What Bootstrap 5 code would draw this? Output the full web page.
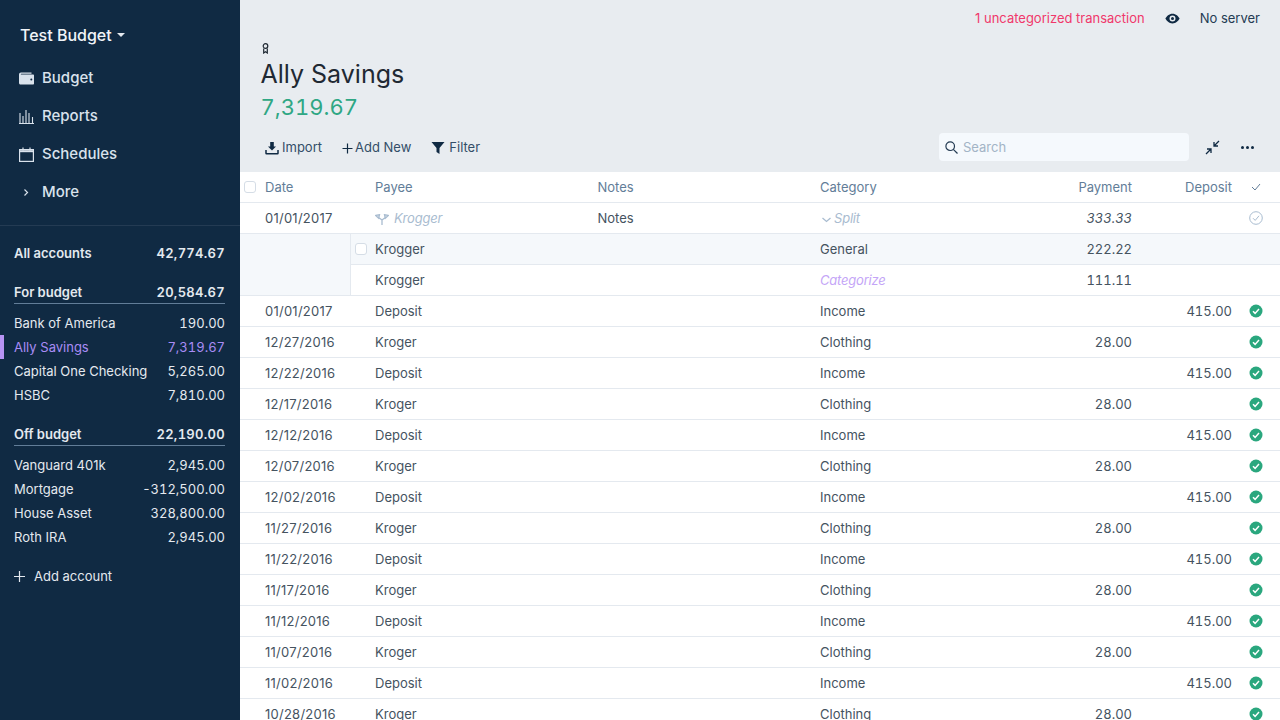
<!DOCTYPE html>
<html lang="en">
<head>
  <meta charset="UTF-8">
  <title>Ally Savings</title>
  <link href="https://cdn.jsdelivr.net/npm/bootstrap@5.3.3/dist/css/bootstrap.min.css" rel="stylesheet">
  <style>
    html, body { height: 720px; overflow: hidden; }
    body {
      font-family: Inter, "Liberation Sans", sans-serif;
      font-size: 13px;
      color: #243b53;
      background: #e8ecf0;
    }
    .amt { font-variant-numeric: tabular-nums; }
    .side-bar { width: 240px; height: 720px; background: #102a43; color: #e4e9ef; flex: none; }
    .budget-name { padding: 24px 0 13px 20px; font-size: 16px; font-weight: 500; line-height: 22px; color: #f0f4f8; }
    .caret-down { width: 0; height: 0; border: 4px solid transparent; border-top: 4px solid #e4e9ef; border-bottom: 0; margin-left: 5px; }
    .side-nav { height: 167px; border-bottom: 1px solid #243b53; }
    .side-link { height: 38px; padding-left: 19px; font-size: 15px; font-weight: 500; color: #d9e2ec; }
    .side-link svg { width: 15px; height: 15px; margin-right: 8px; flex: none; }
    .acct-list { padding: 0 15px 0 14px; }
    .acct-row { height: 24px; line-height: 24px; position: relative; }
    .acct-total { font-weight: 600; color: #e4e9ef; }
    .acct-group { height: 24px; line-height: 24px; font-weight: 600; color: #e4e9ef; border-bottom: 1px solid #627d98; margin-top: 15px; margin-bottom: 7px; }
    .acct-total .amt, .acct-group .amt { letter-spacing: .3px; }
    .acct-on { color: #a98cf5; }
    .acct-on::before { content: ""; position: absolute; left: -14px; top: 0; width: 4px; height: 24px; background: #b794f4; }
    .add-acct { height: 24px; line-height: 24px; margin-top: 15px; }
    .main-area { min-width: 0; }
    .top-strip { height: 36px; padding-right: 20px; }
    .top-text { margin-top: 2px; }
    .uncat { color: #f0386b; margin-right: 20px; }
    .title-block { padding-left: 20.5px; height: 86px; padding-top: 7px; }
    .acct-icon { display: block; margin-left: 1px; width: 7px; height: 11px; }
    .acct-title { font-size: 25px; font-weight: 400; line-height: 34px; margin: 3px 0 0; color: #1f2933; }
    .acct-balance { font-size: 22px; line-height: 32px; color: #2fa784; }
    .tool-bar { height: 50px; padding: 0 20px 0 25px; }
    .tool-btn { color: #334e68; margin-right: 20px; margin-top: 2px; }
    .tool-btn svg { margin-right: 3px; }
    .search-box { width: 250px; height: 28px; background: #f5f9fd; border-radius: 4px; padding-left: 6px; color: #a3b4c6; }
    .search-box span { margin-top: 1px; }
    .txn-table { table-layout: fixed; width: 1040px; margin: 0; background: #fff; font-size: 13px; border-collapse: separate; border-spacing: 0; }
    .txn-table td, .txn-table th { height: 31px; padding: 2px 0 0; border-bottom: 1px solid #e4e9ef; background: #fff; font-weight: 400; box-shadow: none; vertical-align: middle; white-space: nowrap; }
    .txn-table th { color: #627d98; }
    .txn-table td { color: #45535f; }
    .txn-table .status-cell, .txn-table .box-cell { padding-top: 0; }
    .date-text { letter-spacing: .25px; }
    .num-cell { text-align: right; font-variant-numeric: tabular-nums; }
    .box-mark { display: block; width: 12px; height: 12px; border: 1px solid #d5dde6; border-radius: 3px; background: #fff; }
    .txn-table td.ghost { color: #a9bcd0; font-style: italic; letter-spacing: -.2px; }
    .txn-table td.child-left { background: #f5f8fb; border-right: 1px solid #e4e9ef; }
    .txn-table tr.child-hi td { background: #f5f8fb; }
    .txn-table td.cat-prompt { color: #c4a5f7; font-style: italic; letter-spacing: -.2px; }
    .italic-num { font-style: italic; }
    .status-cell svg { display: block; margin: 0 auto; }
  </style>
</head>
<body>
<div class="d-flex">
  <aside class="side-bar">
    <div class="budget-name d-flex align-items-center">Test Budget<span class="caret-down"></span></div>
    <nav class="side-nav">
      <div class="side-link d-flex align-items-center">
        <svg viewBox="0 0 15 15"><path fill="#d9e2ec" d="M2 1.500h10.500v1.200H2.200c-.5 0-.5.8 0 .8H14c.6 0 1 .4 1 1v8c0 .6-.4 1-1 1H1.500C.7 13.500 0 12.800 0 12V3.500C0 2.400.9 1.500 2 1.500z"/><circle cx="12.300" cy="8.500" r="1" fill="#102a43"/></svg>Budget
      </div>
      <div class="side-link d-flex align-items-center">
        <svg viewBox="0 0 15 15" fill="none" stroke="#d9e2ec" stroke-width="1.100"><path d="M0 14.500h15M1 4v10M4 7v7M7 1v13M10 4v10M13.500 8v6"/></svg>Reports
      </div>
      <div class="side-link d-flex align-items-center">
        <svg viewBox="0 0 15 15" fill="none" stroke="#d9e2ec" stroke-width="1.200"><rect x=".6" y="2.600" width="13.800" height="11.800"/><path d="M.6 4.200h13.800" stroke-width="2"/><path d="M4 .5v3M11 .5v3"/></svg>Schedules
      </div>
      <div class="side-link d-flex align-items-center">
        <svg viewBox="0 0 15 15" fill="none" stroke="#d9e2ec" stroke-width="1.200"><path d="M5.500 4.500l3 3-3 3"/></svg>More
      </div>
    </nav>
    <div class="acct-list" id="acctList"></div>
  </aside>

  <main class="main-area flex-grow-1">
    <div class="top-strip d-flex align-items-center justify-content-end">
      <span class="uncat top-text">1 uncategorized transaction</span>
      <svg width="15" height="15" viewBox="0 0 20 20" class="me-3"><path fill="#102a43" d="M10 3.500C5.500 3.500 2 7 .5 10c1.500 3 5 6.500 9.500 6.500s8-3.500 9.500-6.500C18 7 14.500 3.500 10 3.500zm0 10.500a4 4 0 1 1 0-8 4 4 0 0 1 0 8z"/><circle cx="10" cy="10" r="2" fill="#102a43"/></svg>
      <span class="ms-1 top-text">No server</span>
    </div>
    <div class="title-block">
      <svg class="acct-icon" viewBox="0 0 7 11" fill="none" stroke="#1f2933" stroke-width="1.200"><circle cx="3.500" cy="3" r="2.300"/><path d="M1.700 5.500v4.500l1.800-1.200 1.800 1.200V5.500"/></svg>
      <h1 class="acct-title">Ally Savings</h1>
      <div class="acct-balance amt">7,319.67</div>
    </div>
    <div class="tool-bar d-flex align-items-center">
      <span class="tool-btn d-flex align-items-center">
        <svg width="14" height="14" viewBox="0 0 14 14"><path fill="#102a43" d="M5.200 1h3.600v4.500H11L7 9.500l-4-4h2.200z"/><path fill="none" stroke="#102a43" stroke-width="1.500" d="M1 9v3.300c0 .3.200.5.500.5h11c.3 0 .5-.2.500-.5V9"/></svg>Import
      </span>
      <span class="tool-btn d-flex align-items-center">
        <svg width="11" height="11" viewBox="0 0 11 11" stroke="#102a43" stroke-width="1.200" style="margin-right:2px"><path d="M5.500.5v10M.5 5.500h10"/></svg>Add New
      </span>
      <span class="tool-btn d-flex align-items-center">
        <svg width="14" height="12" viewBox="0 0 14 12" class="me-1"><path fill="#102a43" d="M.5 0h13L8.500 6v6l-3-2V6z"/></svg>Filter
      </span>
      <div class="search-box d-flex align-items-center ms-auto">
        <svg width="13" height="13" viewBox="0 0 13 13" fill="none" stroke="#243b53" stroke-width="1.200" style="margin-right:5px"><circle cx="5.200" cy="5.200" r="4.300"/><path d="M8.300 8.300l4.200 4.200"/></svg>
        <span>Search</span>
      </div>
      <svg width="15" height="15" viewBox="0 0 15 15" fill="none" stroke="#102a43" stroke-width="1.300" style="margin-left:16px"><path d="M14 1L9 6M9 2v4h4M1 14l5-5M2 9h4v4"/></svg>
      <svg width="13" height="3" viewBox="0 0 13 3" fill="#102a43" style="margin-left:21px;margin-right:6px"><circle cx="1.500" cy="1.500" r="1.500"/><circle cx="6.500" cy="1.500" r="1.500"/><circle cx="11.500" cy="1.500" r="1.500"/></svg>
    </div>
    <table class="table txn-table">
      <colgroup>
        <col style="width:25px"><col style="width:86px"><col style="width:24px"><col style="width:222.500px"><col style="width:222.500px"><col style="width:212px"><col style="width:100px"><col style="width:100px"><col style="width:48px">
      </colgroup>
      <thead>
        <tr>
          <th class="ps-1 box-cell"><span class="box-mark"></span></th>
          <th colspan="2">Date</th><th>Payee</th><th>Notes</th><th>Category</th>
          <th class="num-cell">Payment</th><th class="num-cell">Deposit</th>
          <th class="status-cell"><svg width="10" height="8" viewBox="0 0 10 8" fill="none" stroke="#627d98"><path d="M1 4l3 3 5-6"/></svg></th>
        </tr>
      </thead>
      <tbody id="txnRows">
        <tr>
          <td></td><td colspan="2" class="date-text">01/01/2017</td>
          <td class="ghost"><svg width="14" height="11" viewBox="0 0 14 11" fill="none" stroke="#a9bcd0" stroke-width="1.300" style="margin-right:5px"><path d="M7 11V6L3 3M7 6l4-3M.8 1.500l3.700-.8-.8 3.500zM13.200 1.500l-3.700-.8.8 3.500z"/></svg>Krogger</td>
          <td>Notes</td>
          <td class="ghost"><svg width="9" height="6" viewBox="0 0 9 6" fill="none" stroke="#a9bcd0" stroke-width="1.300" style="margin:0 3px 0 2px"><path d="M.5 1l4 3.500 4-3.500"/></svg>Split</td>
          <td class="num-cell italic-num">333.33</td><td></td>
          <td class="status-cell"><svg width="14" height="14" viewBox="0 0 14 14" fill="none" stroke="#a9bcd0"><circle cx="7" cy="7" r="6.300"/><path d="M4 7.200l2.200 2.200L10 4.800"/></svg></td>
        </tr>
        <tr class="child-hi">
          <td colspan="2" rowspan="2" class="child-left"></td>
          <td class="ps-1 pe-1 box-cell"><span class="box-mark"></span></td>
          <td>Krogger</td><td></td><td>General</td><td class="num-cell">222.22</td><td></td><td></td>
        </tr>
        <tr>
          <td></td><td>Krogger</td><td></td><td class="cat-prompt">Categorize</td><td class="num-cell">111.11</td><td></td><td></td>
        </tr>
      </tbody>
    </table>
  </main>
</div>

<script src="https://cdn.jsdelivr.net/npm/bootstrap@5.3.3/dist/js/bootstrap.bundle.min.js"></script>
<script>
const acctRow = (name, amt, cls = "") =>
  `<div class="acct-row d-flex justify-content-between ${cls}"><span>${name}</span><span class="amt">${amt}</span></div>`;
const acctGroup = (name, amt) =>
  `<div class="acct-group d-flex justify-content-between"><span>${name}</span><span class="amt">${amt}</span></div>`;

document.getElementById("acctList").innerHTML =
  `<div style="height:15px"></div>` +
  acctRow("All accounts", "42,774.67", "acct-total") +
  acctGroup("For budget", "20,584.67") +
  acctRow("Bank of America", "190.00") +
  acctRow("Ally Savings", "7,319.67", "acct-on") +
  acctRow("Capital One Checking", "5,265.00") +
  acctRow("HSBC", "7,810.00") +
  acctGroup("Off budget", "22,190.00") +
  acctRow("Vanguard 401k", "2,945.00") +
  acctRow("Mortgage", "-312,500.00") +
  acctRow("House Asset", "328,800.00") +
  acctRow("Roth IRA", "2,945.00") +
  `<div class="add-acct d-flex align-items-center"><svg width="11" height="11" viewBox="0 0 11 11" stroke="#e4e9ef" stroke-width="1.200" style="margin-right:9px"><path d="M5.500 0v11M0 5.500h11"/></svg>Add account</div>`;

const dates = ["01/01/2017", "12/27/2016", "12/22/2016", "12/17/2016", "12/12/2016", "12/07/2016", "12/02/2016",
  "11/27/2016", "11/22/2016", "11/17/2016", "11/12/2016", "11/07/2016", "11/02/2016", "10/28/2016"];
const tick = `<svg width="14" height="14" viewBox="0 0 14 14"><circle cx="7" cy="7" r="6.500" fill="#2aa77e"/><path d="M4 7.300l2.100 2.100L10 5" fill="none" stroke="#fff" stroke-width="1.500"/></svg>`;

document.getElementById("txnRows").innerHTML += dates.map((d, i) => {
  const dep = i % 2 === 0;
  return `<tr>
    <td></td><td colspan="2" class="date-text">${d}</td>
    <td>${dep ? "Deposit" : "Kroger"}</td><td></td>
    <td>${dep ? "Income" : "Clothing"}</td>
    <td class="num-cell">${dep ? "" : "28.00"}</td>
    <td class="num-cell">${dep ? "415.00" : ""}</td>
    <td class="status-cell">${tick}</td>
  </tr>`;
}).join("");
</script>
</body>
</html>
